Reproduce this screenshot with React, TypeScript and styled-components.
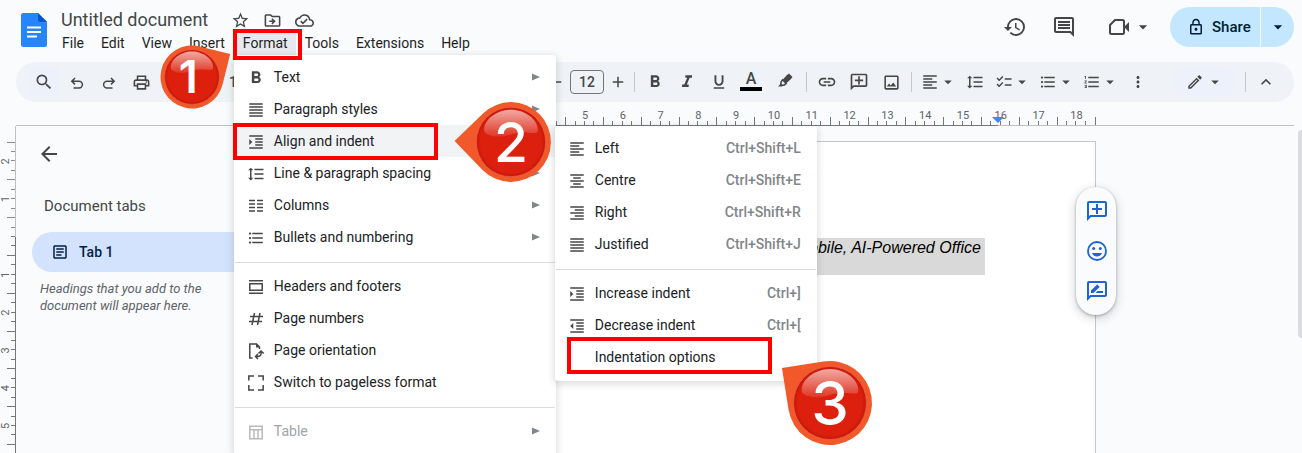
import React from "react";
import styled, { createGlobalStyle, css } from "styled-components";
import {
  MdStarBorder,
  MdOutlineDriveFileMove,
  MdOutlineCloudDone,
  MdSearch,
  MdOutlinePrint,
  MdRemove,
  MdAdd,
  MdFormatBold,
  MdFormatItalic,
  MdFormatUnderlined,
  MdLink,
  MdOutlineAddComment,
  MdOutlineImage,
  MdFormatAlignLeft,
  MdFormatAlignCenter,
  MdFormatAlignRight,
  MdFormatAlignJustify,
  MdFormatIndentIncrease,
  MdFormatIndentDecrease,
  MdFormatLineSpacing,
  MdChecklist,
  MdFormatListBulleted,
  MdFormatListNumbered,
  MdMoreVert,
  MdOutlineEdit,
  MdKeyboardArrowUp,
  MdHistory,
  MdOutlineComment,
  MdLockOutline,
  MdArrowBack,
  MdArrowDropDown,
  MdOutlineArticle,
  MdOutlineRateReview,
} from "react-icons/md";

const GlobalStyle = createGlobalStyle`
  * { box-sizing: border-box; }
  body { margin: 0; background: #f9fbfd; font-family: Roboto, "Liberation Sans", sans-serif; color: #444746; }
  button, input { font: inherit; color: inherit; }
  svg { display: block; flex: none; }
`;

const Shell = styled.div`
  height: 100vh;
  display: flex;
  flex-direction: column;
  overflow: hidden;
`;

const resetButton = css`
  border: 0;
  padding: 0;
  background: none;
  cursor: pointer;
`;

const Flipped = styled.span`
  transform: scaleX(-1);
`;

/* Header */

const Header = styled.header`
  display: flex;
  flex: none;
  height: 62px;
  padding: 7px 8px 0 21px;
`;

const Logo = styled.a`
  margin: 6px 7px 0 0;
`;

const Heading = styled.div`
  display: flex;
  flex-direction: column;
  flex: 1;
`;

const TitleRow = styled.div`
  display: flex;
  align-items: center;
  height: 26px;
  padding-left: 7px;
  gap: 12px;
`;

const Title = styled.h1`
  margin: 0 5px 0 0;
  width: 152px;
  font-size: 18px;
  line-height: 26px;
  font-weight: 400;
  white-space: nowrap;
`;

const TitleButton = styled.button`
  ${resetButton}
  width: 20px;
  height: 20px;
  display: grid;
  place-items: center;
`;

const MenuBar = styled.nav`
  display: flex;
  gap: 1px;
`;

const MenuAnchor = styled.div`
  position: relative;
  margin-left: 1px;
`;

const MenuBarButton = styled.button<{ $open?: boolean }>`
  ${resetButton}
  height: 22px;
  padding: 0 8px 2px;
  font-size: 14px;
  line-height: 20px;
  color: #1f1f1f;
  background: ${(p) => (p.$open ? "#e6e9ed" : "none")};
`;

const Actions = styled.div`
  display: flex;
  align-items: center;
  height: 40px;
`;

const ActionButton = styled.button`
  ${resetButton}
  display: flex;
  align-items: center;
  justify-content: center;
  width: 49px;
  height: 40px;
`;

const CallButton = styled(ActionButton)`
  justify-content: flex-end;
  gap: 3px;
  width: 65px;
`;

const ShareGroup = styled.div`
  display: flex;
  gap: 1px;
  margin-left: 17px;
  color: #001d35;
`;

const ShareButton = styled.button`
  ${resetButton}
  display: flex;
  align-items: center;
  gap: 7px;
  width: 90px;
  height: 40px;
  padding-left: 17px;
  border-radius: 20px 0 0 20px;
  background: #c2e7ff;
  font-size: 15px;
  font-weight: 500;
`;

const ShareMore = styled.button`
  ${resetButton}
  display: grid;
  place-items: center;
  width: 33px;
  height: 40px;
  border-radius: 0 20px 20px 0;
  background: #c2e7ff;
`;

/* Toolbar */

const Toolbar = styled.div`
  display: flex;
  align-items: center;
  flex: none;
  height: 40px;
  margin: 0 8px 0 16px;
  padding: 0 12px 0 10px;
  border-radius: 20px;
  background: #eff3f8;
`;

const Tool = styled.button<{ $w?: number }>`
  ${resetButton}
  display: grid;
  place-items: center;
  flex: none;
  width: ${(p) => p.$w ?? 32}px;
  height: 30px;
`;

const SearchTool = styled(Tool)`
  background: #edf1fb;
`;

const SplitTool = styled.button`
  ${resetButton}
  display: flex;
  align-items: center;
  flex: none;
  height: 30px;
  width: 42px;
  margin-right: 2px;
  padding-left: 5px;
`;

const ZoomTool = styled.button`
  ${resetButton}
  width: 96px;
  margin: 0 219px 0 72px;
  flex: none;
  font-size: 14px;
  font-weight: 500;
  text-align: left;
`;

const SizeInput = styled.input`
  width: 34px;
  height: 24px;
  margin: 0 2px;
  padding: 0;
  flex: none;
  border: 1px solid #747775;
  border-radius: 4px;
  background: none;
  font-size: 14px;
  font-weight: 500;
  text-align: center;
`;

const Divider = styled.span`
  flex: none;
  width: 1px;
  height: 20px;
  margin: 0 4px;
  background: #c7c7c7;
`;

const ColorLetter = styled.span`
  width: 22px;
  height: 18px;
  border-bottom: 4px solid #000;
  font-size: 16px;
  font-weight: 500;
  line-height: 12px;
  text-align: center;
`;

const ModeTool = styled.button`
  ${resetButton}
  display: flex;
  align-items: center;
  justify-content: center;
  gap: 2px;
  width: 63px;
  height: 30px;
  margin: 0 5px 0 auto;
  border-radius: 15px;
  background: #edf1fb;
`;

/* Workspace */

const RulerRow = styled.div`
  flex: none;
  height: 24px;
  overflow: hidden;
`;

const Workspace = styled.main`
  display: flex;
  flex: 1;
  min-height: 0;
`;

const VerticalRuler = styled.div`
  width: 16px;
  flex: none;
  overflow: hidden;
`;

const Sidebar = styled.aside`
  width: 286px;
  flex: none;
  padding: 16px 0 0 16px;
`;

const BackButton = styled.button`
  ${resetButton}
  display: grid;
  place-items: center;
  width: 24px;
  height: 24px;
  margin-left: 5px;
`;

const SidebarTitle = styled.h2`
  margin: 30px 0 16px 12px;
  font-size: 15px;
  line-height: 20px;
  font-weight: 400;
`;

const TabLink = styled.a`
  display: flex;
  align-items: center;
  gap: 10px;
  height: 40px;
  padding-left: 19px;
  border-radius: 20px;
  background: #d3e3fd;
  color: #041e49;
  font-size: 14px;
  font-weight: 500;
  text-decoration: none;
`;

const SidebarHint = styled.p`
  width: 190px;
  margin: 8px 0 0 8px;
  font-size: 13px;
  line-height: 17px;
  font-style: italic;
  color: #5f6368;
`;

const Paper = styled.article`
  position: relative;
  width: 794px;
  flex: none;
  margin-top: 15px;
  padding: 96px 110px 0 94px;
  border: 1px solid #c7c7c7;
  border-bottom: 0;
  background: #fff;
`;

const Selection = styled.p`
  margin: 0;
  height: 37px;
  padding-right: 4px;
  background: #d9d9d9;
  color: #000;
  font-family: "Liberation Sans", Arial, sans-serif;
  font-size: 16px;
  line-height: 20px;
  font-style: italic;
  text-align: right;
`;

const FloatingTools = styled.div`
  position: absolute;
  top: 45px;
  right: -21px;
  display: flex;
  flex-direction: column;
  align-items: center;
  justify-content: space-between;
  width: 40px;
  height: 128px;
  padding: 12px 0 12px 2px;
  border-radius: 20px;
  background: #f9fbfd;
  color: #1f64d6;
  box-shadow: 0 1px 3px rgba(60, 64, 67, 0.4), 0 3px 8px 2px rgba(60, 64, 67, 0.16);
`;

const FloatingButton = styled.button`
  ${resetButton}
  display: grid;
  place-items: center;
  width: 24px;
  height: 24px;
`;

const ScrollThumb = styled.div`
  width: 4px;
  height: 208px;
  margin: 4px 0 0 auto;
  border-radius: 4px 0 0 4px;
  background: #dadce0;
`;

/* Menus */

const MenuList = styled.ul<{ $sub?: boolean }>`
  position: absolute;
  z-index: ${(p) => (p.$sub ? 2 : 1)};
  top: ${(p) => (p.$sub ? "1px" : "100%")};
  left: ${(p) => (p.$sub ? "321px" : "-1px")};
  width: ${(p) => (p.$sub ? 262 : 322)}px;
  margin: 0;
  padding: 6px 0 8px;
  list-style: none;
  background: #fff;
  border-radius: 4px;
  box-shadow: 0 2px 6px 2px rgba(60, 64, 67, 0.15);
`;

const MenuRow = styled.li`
  position: relative;
`;

const MenuButton = styled.button<{ $active?: boolean }>`
  ${resetButton}
  display: flex;
  align-items: center;
  width: 100%;
  height: 32px;
  padding: 0 16px 0 12px;
  background: ${(p) => (p.$active ? "#f1f3f4" : "none")};
  color: #202124;
  font-size: 14px;
  line-height: 20px;
  text-align: left;
  white-space: nowrap;
  &:disabled {
    color: #a0a4a9;
  }
`;

const MenuIcon = styled.span`
  display: grid;
  place-items: center;
  width: 20px;
  margin-right: 8px;
  padding-top: 2px;
  color: #444746;
  ${MenuButton}:disabled & {
    color: #b8babc;
  }
`;

const MenuLabel = styled.span`
  flex: 1;
`;

const Shortcut = styled.kbd`
  font-family: inherit;
  font-weight: 500;
  color: #80868b;
`;

const Separator = styled.li`
  height: 1px;
  margin: 9px 1px 7px;
  background: #dadce0;
`;

const Highlight = styled.span<{ $top: number; $left: number; $w: number; $h: number }>`
  position: absolute;
  z-index: 3;
  top: ${(p) => p.$top}px;
  left: ${(p) => p.$left}px;
  width: ${(p) => p.$w}px;
  height: ${(p) => p.$h}px;
  border: 4px solid #f00;
  pointer-events: none;
`;

const PinBox = styled.span<{ $x: number; $y: number; $size: number }>`
  position: absolute;
  z-index: 4;
  left: ${(p) => p.$x - p.$size / 2}px;
  top: ${(p) => p.$y - p.$size / 2}px;
  pointer-events: none;
`;

/* Numbered step marker: a glossy disc inside a drop whose tip points at `angle`. */
function Pin({ n, x, y, size, angle, font, weight = 500, dx = 0 }: {
  n: number; x: number; y: number; size: number; angle: number; font: number; weight?: number; dx?: number;
}) {
  return (
    <PinBox $x={x} $y={y} $size={size}>
      <svg width={size} height={size} viewBox="-60 -60 120 120">
        <defs>
          <linearGradient id={`gloss${n}`} x1="0" y1="0" x2="0" y2="1">
            <stop offset="0" stopColor="#fff" stopOpacity="0.62" />
            <stop offset="1" stopColor="#fff" stopOpacity="0.1" />
          </linearGradient>
          <radialGradient id={`disc${n}`}>
            <stop offset="0.88" stopColor="#dc200d" />
            <stop offset="1" stopColor="#c4160a" />
          </radialGradient>
        </defs>
        <path d="M59.4 0L29.7 29.7A42 42 0 1 1 29.7 -29.7Z" fill="#f1592a" transform={`rotate(${angle})`} />
        <circle r="36.5" fill={`url(#disc${n})`} stroke="#e8604a" strokeWidth="0.8" />
        <path d="M-28 -11C-30 -23 -15 -34 0 -34S30 -23 28 -11C27 -7 14 -13 0 -8S-27 -7 -28 -11Z" fill={`url(#gloss${n})`} />
        <text x={dx} y={font * 0.364} fontSize={font} fontWeight={weight} fill="#fff" textAnchor="middle" fontFamily="Inter, sans-serif">
          {n}
        </text>
      </svg>
    </PinBox>
  );
}

/* Drawings that the icon package lacks */

const line = { fill: "none", stroke: "currentColor", strokeWidth: 1.5 };

const DocsLogo = () => (
  <svg width="26" height="34" viewBox="0 0 26 34">
    <path d="M2.500 0H17L26 9V31.500A2.500 2.500 0 0 1 23.500 34H2.500A2.500 2.500 0 0 1 0 31.500V2.500A2.500 2.500 0 0 1 2.500 0Z" fill="#2684fc" />
    <path d="M17 0L26 9H19.500A2.500 2.500 0 0 1 17 6.500Z" fill="#0057cc" />
    <path d="M6 14.500H20M6 19H20M6 23.500H16" stroke="#fff" strokeWidth="1.8" />
  </svg>
);

const Undo = ({ flip = false }) => (
  <svg width="16" height="16" viewBox="0 0 16 16" {...line}>
    <g transform={flip ? "translate(16 0) scale(-1 1)" : undefined}>
      <path d="M6 4L2.800 7.200L6 10.400M3 7.200H10A3.400 3.400 0 0 1 10 14H4.500" />
    </g>
  </svg>
);

const Highlighter = () => (
  <svg width="16" height="18" viewBox="0 2 16 18">
    <path d="M9.500 2.500L12 0.500L15.500 4L13.500 6.500L9 10.500L5.500 7Z" fill="currentColor" transform="translate(0 2)" />
    <path d="M5.500 8.800L9.200 12.400L7 14.200H3.800L4 11Z" fill="none" stroke="currentColor" strokeWidth="1.5" />
    <path d="M1 15.500L4 12.500L6 14.500L5 15.500Z" fill="currentColor" />
  </svg>
);

const Camera = () => (
  <svg width="22" height="20" viewBox="0 0 22 20">
    <path d="M7 3H14.500A1.500 1.500 0 0 1 16 4.500V15.500A1.500 1.500 0 0 1 14.500 17H3.500A1.500 1.500 0 0 1 2 15.500V8Z" fill="none" stroke="currentColor" strokeWidth="2" strokeLinejoin="round" />
    <path d="M16 10L21 5V15Z" fill="currentColor" />
  </svg>
);

const Smile = () => (
  <svg width="20" height="20" viewBox="0 0 20 20">
    <circle cx="10" cy="10" r="9" fill="none" stroke="currentColor" strokeWidth="1.8" />
    <circle cx="6.700" cy="7.500" r="1.500" fill="currentColor" />
    <circle cx="13.300" cy="7.500" r="1.500" fill="currentColor" />
    <path d="M5 12H15C14 14.400 12.200 15.500 10 15.500S6 14.400 5 12Z" fill="currentColor" />
  </svg>
);

const ColumnsIcon = () => (
  <svg width="16" height="14" viewBox="0 0 16 14" {...line}>
    <path d="M1 1.500H7M9 1.500H15M1 5H7M9 5H15M1 8.500H7M9 8.500H15M1 12H7M9 12H15" />
  </svg>
);

const HeadersIcon = () => (
  <svg width="16" height="14" viewBox="0 0 16 14" {...line}>
    <path d="M1 0.800H15M1 13.200H15M1.800 3.800H14.200V10.200H1.800Z" />
  </svg>
);

const HashIcon = () => (
  <svg width="16" height="14" viewBox="0 0 16 14" {...line}>
    <path d="M6.500 1L4 13M12 1L9.500 13M2 4.500H15M1 9.500H14" />
  </svg>
);

const OrientationIcon = () => (
  <svg width="18" height="18" viewBox="0 0 18 18" {...line}>
    <path d="M5.500 16H2.800V2H9.500L12.500 5V7" />
    <path d="M9 1.500V5.500H13Z" fill="currentColor" stroke="none" />
    <path d="M14 9.500C14.800 13 13 15 9.500 14.500M11.500 11.500L14 9L16.800 11.500M11 12L8.500 14.500L11 17" />
  </svg>
);

const PagelessIcon = () => (
  <svg width="18" height="16" viewBox="0 0 18 16" {...line}>
    <path d="M7 1H1.800V5.500M11 1H16.200V5.500M1.800 10V15H7M16.200 10V15H11" />
  </svg>
);

const TableIcon = () => (
  <svg width="16" height="15" viewBox="0 0 16 15" {...line}>
    <path d="M1.800 1.300H14.200V13.700H1.800ZM2 4.800H14M6 5V13.500M10 5V13.500" />
  </svg>
);

const CM = 378 / 10;

function HorizontalTicks() {
  const origin = 396;
  const marks = Array.from({ length: 58 }, (_, i) => 16 + i);
  return (
    <svg width="100%" height="24">
      <rect x="16" y="23" width="1278" height="1" fill="#c0c0c0" />
      <rect x="396" y="23" width="602" height="1" fill="#747775" />
      {marks.map((q) => {
        const tall = q % 4 === 2;
        return (
          <rect key={q} x={Math.round(origin + (q * CM) / 4 - 1)} y={tall ? 15 : 19} width="1" height={tall ? 8 : 4} fill="#747775" />
        );
      })}
      <rect x="1095" y="15" width="1" height="8" fill="#747775" />
      {Array.from({ length: 14 }, (_, i) => i + 5).map((n) => (
        <text key={n} x={origin + n * CM} y="17" fontSize="11" fill="#5f6368" textAnchor="middle">
          {n}
        </text>
      ))}
      <path d="M992 15H1004L998 21Z" fill="#4285f4" />
    </svg>
  );
}

function VerticalTicks() {
  const zero = 111;
  const marks = Array.from({ length: 33 }, (_, i) => i - 10);
  return (
    <svg width="16" height="600">
      <rect x="15" y="0" width="1" height="111" fill="#c0c0c0" />
      <rect x="15" y="111" width="1" height="489" fill="#747775" />
      {marks.map((q) => {
        const tall = Math.abs(q) % 4 === 2;
        return (
          <rect key={q} x={tall ? 7 : 11} y={Math.round(zero + (q * CM) / 4 - 1)} width={tall ? 8 : 4} height="1" fill={q < 0 ? "#8a8d90" : "#747775"} />
        );
      })}
      {[-2, -1, 1, 2, 3, 4, 5].map((n) => (
        <text key={n} transform={`translate(9 ${zero + n * CM}) rotate(-90)`} fontSize="11" fill="#5f6368" textAnchor="middle">
          {Math.abs(n)}
        </text>
      ))}
    </svg>
  );
}

const Arrow = () => (
  <svg width="8" height="8" viewBox="0 0 8 8">
    <path d="M0 0.500L8 4L0 7.500Z" fill="#80868b" />
  </svg>
);

type ItemProps = {
  icon?: React.ReactNode;
  label: string;
  keys?: string;
  submenu?: boolean;
  active?: boolean;
  disabled?: boolean;
  children?: React.ReactNode;
};

function Item({ icon, label, keys, submenu, active, disabled, children }: ItemProps) {
  return (
    <MenuRow role="none">
      <MenuButton role="menuitem" $active={active} disabled={disabled} aria-haspopup={submenu ? "menu" : undefined}>
        <MenuIcon>{icon}</MenuIcon>
        <MenuLabel>{label}</MenuLabel>
        {keys && <Shortcut>{keys}</Shortcut>}
        {submenu && <Arrow />}
      </MenuButton>
      {children}
    </MenuRow>
  );
}

function AlignMenu() {
  return (
    <MenuList $sub role="menu" aria-label="Align and indent">
      <Item icon={<MdFormatAlignLeft size={18} />} label="Left" keys="Ctrl+Shift+L" />
      <Item icon={<MdFormatAlignCenter size={18} />} label="Centre" keys="Ctrl+Shift+E" />
      <Item icon={<MdFormatAlignRight size={18} />} label="Right" keys="Ctrl+Shift+R" />
      <Item icon={<MdFormatAlignJustify size={18} />} label="Justified" keys="Ctrl+Shift+J" />
      <Separator role="separator" />
      <Item icon={<MdFormatIndentIncrease size={18} />} label="Increase indent" keys="Ctrl+]" />
      <Item icon={<MdFormatIndentDecrease size={18} />} label="Decrease indent" keys="Ctrl+[" />
      <Item label="Indentation options">
        <Highlight $top={-4} $left={12} $w={205} $h={37} />
        <Pin n={3} x={275} y={62} size={120} angle={216} font={60} />
      </Item>
    </MenuList>
  );
}

function FormatMenu() {
  return (
    <MenuList role="menu" aria-label="Format">
      <Item icon={<MdFormatBold size={20} />} label="Text" submenu />
      <Item icon={<MdFormatAlignJustify size={18} />} label="Paragraph styles" submenu />
      <Item icon={<MdFormatIndentIncrease size={18} />} label="Align and indent" submenu active>
        <Highlight $top={-2} $left={-1} $w={205} $h={37} />
        <Pin n={2} x={277} y={17} size={114} angle={181} font={58} />
        <AlignMenu />
      </Item>
      <Item icon={<MdFormatLineSpacing size={18} />} label="Line & paragraph spacing" submenu />
      <Item icon={<ColumnsIcon />} label="Columns" submenu />
      <Item icon={<MdFormatListBulleted size={18} />} label="Bullets and numbering" submenu />
      <Separator role="separator" />
      <Item icon={<HeadersIcon />} label="Headers and footers" />
      <Item icon={<HashIcon />} label="Page numbers" />
      <Item icon={<OrientationIcon />} label="Page orientation" />
      <Item icon={<PagelessIcon />} label="Switch to pageless format" />
      <Separator role="separator" />
      <Item icon={<TableIcon />} label="Table" submenu disabled />
    </MenuList>
  );
}

export default function App() {
  return (
    <Shell>
      <GlobalStyle />
      <Header>
        <Logo href="#" aria-label="Docs home">
          <DocsLogo />
        </Logo>
        <Heading>
          <TitleRow>
            <Title>Untitled document</Title>
            <TitleButton aria-label="Star"><MdStarBorder size={19} /></TitleButton>
            <TitleButton aria-label="Move"><MdOutlineDriveFileMove size={19} /></TitleButton>
            <TitleButton aria-label="Document status"><MdOutlineCloudDone size={19} /></TitleButton>
          </TitleRow>
          <MenuBar>
            {["File", "Edit", "View", "Insert"].map((m) => (
              <MenuBarButton key={m}>{m}</MenuBarButton>
            ))}
            <MenuAnchor>
              <MenuBarButton $open>Format</MenuBarButton>
              <FormatMenu />
              <Highlight $top={-4} $left={-2} $w={69} $h={31} />
              <Pin n={1} x={-43} y={44} size={90} angle={-31} font={60} weight={600} dx={-5} />
            </MenuAnchor>
            {["Tools", "Extensions", "Help"].map((m) => (
              <MenuBarButton key={m}>{m}</MenuBarButton>
            ))}
          </MenuBar>
        </Heading>
        <Actions>
          <ActionButton aria-label="Version history"><MdHistory size={24} /></ActionButton>
          <ActionButton aria-label="Comments"><MdOutlineComment size={24} /></ActionButton>
          <CallButton aria-label="Video call">
            <Camera />
            <MdArrowDropDown size={20} />
          </CallButton>
          <ShareGroup>
            <ShareButton><MdLockOutline size={18} />Share</ShareButton>
            <ShareMore aria-label="Share options"><MdArrowDropDown size={20} /></ShareMore>
          </ShareGroup>
        </Actions>
      </Header>

      <Toolbar role="toolbar" aria-label="Formatting">
        <SearchTool $w={35} aria-label="Search menus"><MdSearch size={20} /></SearchTool>
        <Tool aria-label="Undo"><Undo /></Tool>
        <Tool aria-label="Redo"><Undo flip /></Tool>
        <Tool aria-label="Print"><MdOutlinePrint size={19} /></Tool>
        <ZoomTool>100%</ZoomTool>
        <Tool $w={24} aria-label="Decrease font size"><MdRemove size={18} /></Tool>
        <SizeInput aria-label="Font size" defaultValue="12" />
        <Tool $w={24} aria-label="Increase font size"><MdAdd size={18} /></Tool>
        <Divider />
        <Tool aria-label="Bold"><MdFormatBold size={20} /></Tool>
        <Tool aria-label="Italic"><MdFormatItalic size={20} /></Tool>
        <Tool aria-label="Underline"><MdFormatUnderlined size={18} /></Tool>
        <Tool aria-label="Text colour"><ColorLetter>A</ColorLetter></Tool>
        <Tool $w={35} aria-label="Highlight colour"><Highlighter /></Tool>
        <Divider />
        <Tool aria-label="Insert link"><MdLink size={20} /></Tool>
        <Tool aria-label="Add comment"><Flipped><MdOutlineAddComment size={20} /></Flipped></Tool>
        <Tool aria-label="Insert image"><MdOutlineImage size={19} /></Tool>
        <Divider />
        <SplitTool aria-label="Align"><MdFormatAlignLeft size={18} /><MdArrowDropDown size={18} /></SplitTool>
        <Tool $w={30} aria-label="Line spacing"><MdFormatLineSpacing size={18} /></Tool>
        <SplitTool aria-label="Checklist"><MdChecklist size={18} /><MdArrowDropDown size={18} /></SplitTool>
        <SplitTool aria-label="Bulleted list"><MdFormatListBulleted size={18} /><MdArrowDropDown size={18} /></SplitTool>
        <SplitTool aria-label="Numbered list"><MdFormatListNumbered size={18} /><MdArrowDropDown size={18} /></SplitTool>
        <Tool aria-label="More"><MdMoreVert size={18} /></Tool>
        <ModeTool aria-label="Editing mode"><MdOutlineEdit size={18} /><MdArrowDropDown size={18} /></ModeTool>
        <Divider />
        <Tool aria-label="Hide menus"><MdKeyboardArrowUp size={20} /></Tool>
      </Toolbar>

      <RulerRow><HorizontalTicks /></RulerRow>

      <Workspace>
        <VerticalRuler><VerticalTicks /></VerticalRuler>
        <Sidebar>
          <BackButton aria-label="Close tabs"><MdArrowBack size={24} /></BackButton>
          <SidebarTitle>Document tabs</SidebarTitle>
          <TabLink href="#"><MdOutlineArticle size={18} />Tab 1</TabLink>
          <SidebarHint>Headings that you add to the document will appear here.</SidebarHint>
        </Sidebar>
        <Paper>
          <Selection>Mobile, AI-Powered Office</Selection>
          <FloatingTools>
            <FloatingButton aria-label="Add comment"><Flipped><MdOutlineAddComment size={24} /></Flipped></FloatingButton>
            <FloatingButton aria-label="Add emoji reaction"><Smile /></FloatingButton>
            <FloatingButton aria-label="Suggest edits"><MdOutlineRateReview size={24} /></FloatingButton>
          </FloatingTools>
        </Paper>
        <ScrollThumb />
      </Workspace>
    </Shell>
  );
}
